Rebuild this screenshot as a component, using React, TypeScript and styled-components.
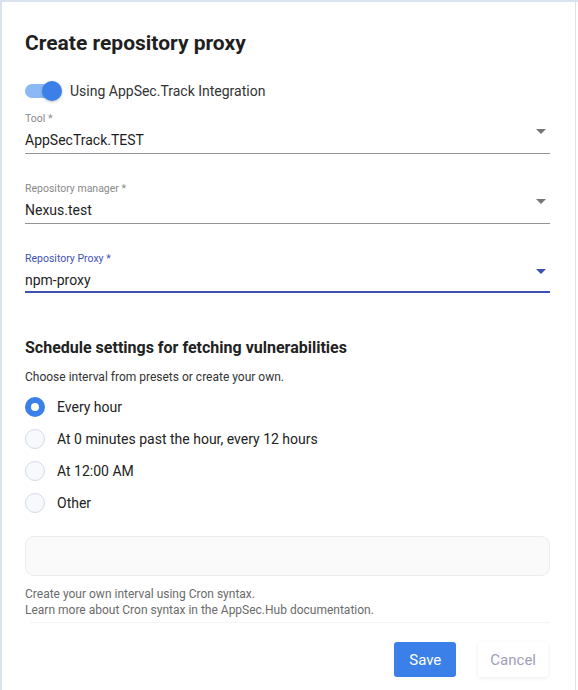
import React, { useState } from "react";
import styled, { createGlobalStyle } from "styled-components";

const GlobalStyle = createGlobalStyle`
  html, body {
    margin: 0;
    padding: 0;
    background: #dbe2ef;
    font-family: Roboto, "Liberation Sans", Arial, sans-serif;
  }
  * { box-sizing: border-box; }
`;

const Frame = styled.div`
  margin: 2px 0 0 2px;
  height: 688px;
  background: #ffffff;
  display: flex;
  overflow: hidden;
`;

const Dialog = styled.div`
  width: 573px;
  padding: 28px 25px 0 23px;
  display: flex;
  flex-direction: column;
`;

const ScrollEdge = styled.div`
  width: 1px;
  background: #e2e2e2;
`;

const Title = styled.h2`
  margin: 0;
  font-size: 21px;
  line-height: 26px;
  font-weight: 700;
  color: #1f1f1f;
`;

const ToggleRow = styled.label`
  display: flex;
  align-items: center;
  gap: 9px;
  margin-top: 25px;
  height: 20px;
  font-size: 14px;
  color: #333;
`;

const Track = styled.span<{ $on: boolean }>`
  position: relative;
  width: 36px;
  height: 14px;
  border-radius: 7px;
  background: ${(p) => (p.$on ? "#8bb9f5" : "#c4c4c4")};
`;

const Thumb = styled.span<{ $on: boolean }>`
  position: absolute;
  top: -3px;
  left: ${(p) => (p.$on ? "17px" : "-2px")};
  width: 20px;
  height: 20px;
  border-radius: 50%;
  background: ${(p) => (p.$on ? "#3b7fe8" : "#fafafa")};
  box-shadow: 0 1px 3px rgba(0, 0, 0, 0.25);
`;

const FieldGroup = styled.div`
  display: flex;
  flex-direction: column;
  gap: 28px;
  margin-top: 11px;
`;

const Field = styled.div<{ $focused?: boolean }>`
  position: relative;
  display: flex;
  flex-direction: column;
  border-bottom: ${(p) => (p.$focused ? "2px solid #3f51b5" : "1px solid #949494")};
  padding-bottom: ${(p) => (p.$focused ? "1px" : "3px")};
`;

const FieldLabel = styled.span<{ $focused?: boolean }>`
  font-size: 10.5px;
  line-height: 13px;
  color: ${(p) => (p.$focused ? "#3f51b5" : "#8a8a8a")};
`;

const FieldValue = styled.span`
  margin-top: 5px;
  font-size: 14px;
  line-height: 20px;
  color: #1e1e1e;
`;

const Caret = styled.span<{ $focused?: boolean }>`
  position: absolute;
  right: 4px;
  top: 17px;
  width: 0;
  height: 0;
  border-left: 5px solid transparent;
  border-right: 5px solid transparent;
  border-top: 5px solid ${(p) => (p.$focused ? "#3f51b5" : "#777")};
`;

const SectionTitle = styled.h3`
  margin: 45px 0 0;
  font-size: 16px;
  line-height: 20px;
  font-weight: 700;
  color: #222;
`;

const Hint = styled.p`
  margin: 11px 0 0;
  font-size: 12px;
  line-height: 16px;
  color: #333;
`;

const RadioList = styled.div`
  display: flex;
  flex-direction: column;
  gap: 12px;
  margin-top: 12px;
`;

const RadioRow = styled.label`
  display: flex;
  align-items: center;
  gap: 12px;
  height: 20px;
  font-size: 14px;
  color: #222;
  cursor: pointer;
`;

const RadioDot = styled.span<{ $checked: boolean }>`
  width: 20px;
  height: 20px;
  border-radius: 50%;
  flex-shrink: 0;
  background: ${(p) => (p.$checked ? "#ffffff" : "#f7f9fd")};
  border: ${(p) => (p.$checked ? "6px solid #3b7fe8" : "1px solid #d3d9e6")};
`;

const CronInput = styled.div`
  margin-top: 23px;
  height: 40px;
  border: 1px solid #ececec;
  border-radius: 9px;
  background: #fafafa;
`;

const HelpText = styled.div`
  margin-top: 10px;
  font-size: 12px;
  line-height: 16px;
  color: #6b6b6b;
`;

const Divider = styled.div`
  margin: 4px 0 0 5px;
  height: 1px;
  background: #f4f4f4;
`;

const Actions = styled.div`
  display: flex;
  justify-content: flex-end;
  gap: 22px;
  margin-top: 19px;
  padding-right: 2px;
`;

const Button = styled.button<{ $primary?: boolean }>`
  height: 35px;
  padding: 0 ${(p) => (p.$primary ? "15px" : "12px")};
  border: none;
  border-radius: 3px;
  font-family: Roboto, "Liberation Sans", Arial, sans-serif;
  font-size: 15px;
  background: ${(p) => (p.$primary ? "#3b7fe8" : "#ffffff")};
  color: ${(p) => (p.$primary ? "#ffffff" : "#a0a0b8")};
  box-shadow: ${(p) => (p.$primary ? "none" : "0 1px 4px rgba(0,0,0,0.08)")};
`;

const fields = [
  { label: "Tool *", value: "AppSecTrack.TEST" },
  { label: "Repository manager *", value: "Nexus.test" },
  { label: "Repository Proxy *", value: "npm-proxy", focused: true },
];

const intervals = [
  "Every hour",
  "At 0 minutes past the hour, every 12 hours",
  "At 12:00 AM",
  "Other",
];

export default function App() {
  const [integration, setIntegration] = useState(true);
  const [interval, setInterval] = useState(0);

  return (
    <>
      <GlobalStyle />
      <Frame>
        <Dialog>
          <Title>Create repository proxy</Title>
          <ToggleRow onClick={() => setIntegration(!integration)}>
            <Track $on={integration}>
              <Thumb $on={integration} />
            </Track>
            Using AppSec.Track Integration
          </ToggleRow>
          <FieldGroup>
            {fields.map((f) => (
              <Field key={f.label} $focused={f.focused}>
                <FieldLabel $focused={f.focused}>{f.label}</FieldLabel>
                <FieldValue>{f.value}</FieldValue>
                <Caret $focused={f.focused} />
              </Field>
            ))}
          </FieldGroup>
          <SectionTitle>Schedule settings for fetching vulnerabilities</SectionTitle>
          <Hint>Choose interval from presets or create your own.</Hint>
          <RadioList>
            {intervals.map((label, i) => (
              <RadioRow key={label} onClick={() => setInterval(i)}>
                <RadioDot $checked={interval === i} />
                {label}
              </RadioRow>
            ))}
          </RadioList>
          <CronInput />
          <HelpText>
            Create your own interval using Cron syntax.
            <br />
            Learn more about Cron syntax in the AppSec.Hub documentation.
          </HelpText>
          <Divider />
          <Actions>
            <Button $primary>Save</Button>
            <Button>Cancel</Button>
          </Actions>
        </Dialog>
        <ScrollEdge />
      </Frame>
    </>
  );
}
